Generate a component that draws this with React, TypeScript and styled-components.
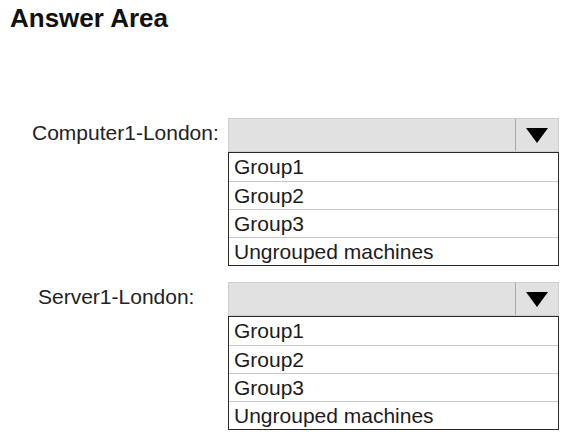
import React from "react";
import styled, { createGlobalStyle } from "styled-components";

const Global = createGlobalStyle`
  html, body { margin: 0; padding: 0; background: #ffffff; }
  body { font-family: "Liberation Sans", Arial, sans-serif; color: #1c1c1c; }
`;

const Page = styled.div`
  width: 566px;
  height: 440px;
  box-sizing: border-box;
  padding: 3px 0 0 10px;
  display: flex;
  flex-direction: column;
`;

const Title = styled.h1`
  margin: 0;
  font-size: 26px;
  line-height: 30px;
  font-weight: 700;
  color: #111;
`;

const Rows = styled.div`
  margin-top: 85px;
  display: flex;
  flex-direction: column;
  gap: 16px;
`;

const Row = styled.div`
  display: flex;
  align-items: flex-start;
`;

const Label = styled.div<{ $indent: number }>`
  width: 218px;
  box-sizing: border-box;
  padding-left: ${(p) => p.$indent}px;
  margin-top: 3px;
  font-size: 21px;
  line-height: 24px;
  color: #222;
`;

const Dropdown = styled.div`
  width: 331px;
  display: flex;
  flex-direction: column;
`;

const Header = styled.div`
  height: 34px;
  box-sizing: border-box;
  border: 1px solid #cfcfcf;
  background: #e1e1e1;
  display: flex;
  justify-content: flex-end;
`;

const ArrowButton = styled.div`
  width: 42px;
  border-left: 1px solid #a8a8a8;
  display: flex;
  align-items: center;
  justify-content: center;
`;

const List = styled.ul`
  margin: 0;
  padding: 0;
  list-style: none;
  border: 1px solid #2a2a2a;
  width: 331px;
  box-sizing: border-box;
`;

const Option = styled.li`
  height: 28px;
  box-sizing: border-box;
  padding-left: 5px;
  font-size: 21px;
  line-height: 28px;
  color: #1c1c1c;
  & + & {
    border-top: 1px solid #c6c6c6;
    line-height: 27px;
  }
`;

const Triangle = () => (
  <svg width="22" height="15" viewBox="0 0 22 15">
    <polygon points="0,0 22,0 11,15" fill="#000" />
  </svg>
);

const options = ["Group1", "Group2", "Group3", "Ungrouped machines"];

const Select = () => (
  <Dropdown>
    <Header>
      <ArrowButton>
        <Triangle />
      </ArrowButton>
    </Header>
    <List>
      {options.map((o) => (
        <Option key={o}>{o}</Option>
      ))}
    </List>
  </Dropdown>
);

export default function App() {
  return (
    <>
      <Global />
      <Page>
        <Title>Answer Area</Title>
        <Rows>
          <Row>
            <Label $indent={22}>Computer1-London:</Label>
            <Select />
          </Row>
          <Row>
            <Label $indent={28}>Server1-London:</Label>
            <Select />
          </Row>
        </Rows>
      </Page>
    </>
  );
}
